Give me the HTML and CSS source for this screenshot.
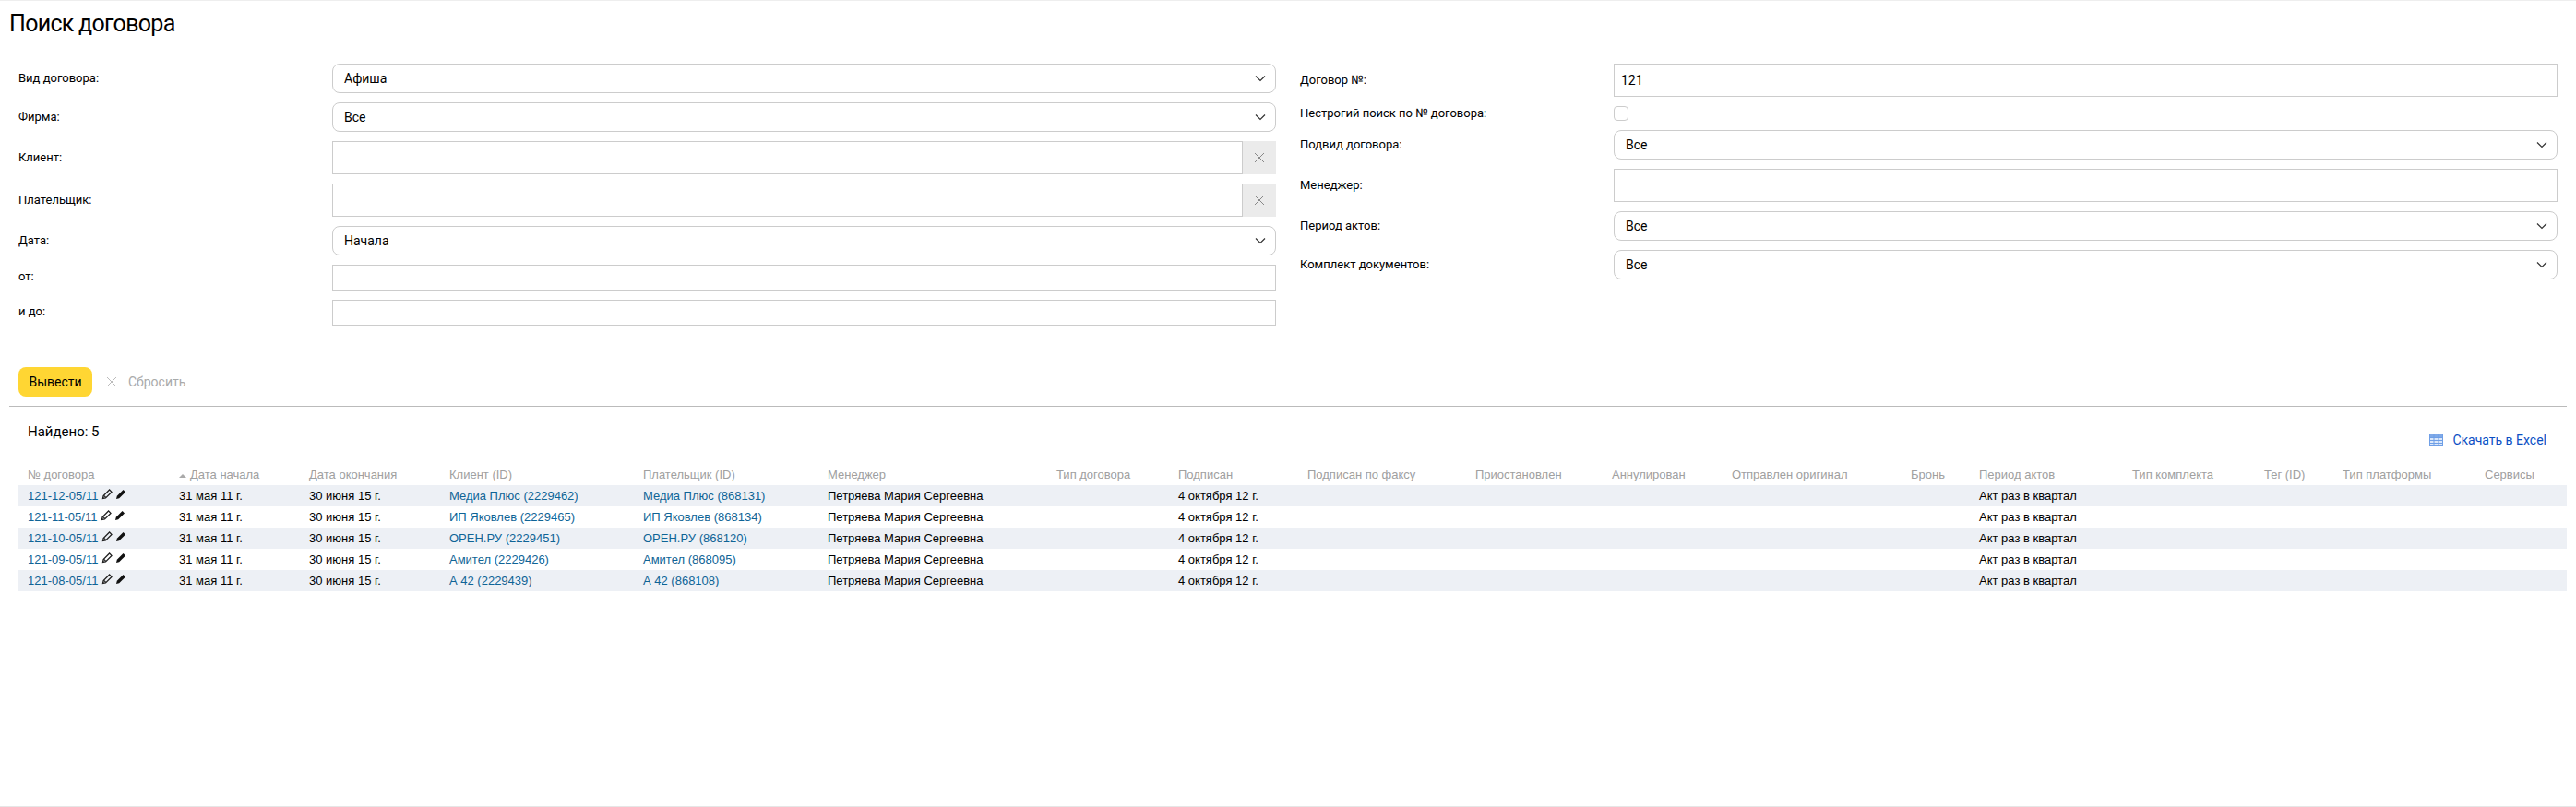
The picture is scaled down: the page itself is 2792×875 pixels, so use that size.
FILE: index.html
```html
<!DOCTYPE html>
<html lang="ru">
<head>
    <meta charset="UTF-8">
    <title>Поиск договора</title>
    <link rel="stylesheet" href="styles.css">
</head>
<body>
    <div class="page">
        <h1 class="title">Поиск договора</h1>
        <form class="filters">
            <div class="filters_col">
                <div class="row"><label>Вид договора:</label><div class="sel">Афиша<svg class="chev" viewBox="0 0 12 8"><path d="M1 1.5l5 5 5-5"/></svg></div></div>
                <div class="row"><label>Фирма:</label><div class="sel">Все<svg class="chev" viewBox="0 0 12 8"><path d="M1 1.5l5 5 5-5"/></svg></div></div>
                <div class="row"><label>Клиент:</label><div class="combo"><div class="inp"></div><div class="clear"><svg class="cross" viewBox="0 0 12 12"><path d="M1 1l10 10M11 1L1 11"/></svg></div></div></div>
                <div class="row"><label>Плательщик:</label><div class="combo"><div class="inp"></div><div class="clear"><svg class="cross" viewBox="0 0 12 12"><path d="M1 1l10 10M11 1L1 11"/></svg></div></div></div>
                <div class="row"><label>Дата:</label><div class="sel">Начала<svg class="chev" viewBox="0 0 12 8"><path d="M1 1.5l5 5 5-5"/></svg></div></div>
                <div class="row row_small"><label>от:</label><div class="inp small"></div></div>
                <div class="row row_small"><label>и до:</label><div class="inp small"></div></div>
            </div>
            <div class="filters_col">
                <div class="row"><label>Договор №:</label><div class="inp">121</div></div>
                <div class="row"><label>Нестрогий поиск по № договора:</label><div class="check"></div></div>
                <div class="row"><label>Подвид договора:</label><div class="sel">Все<svg class="chev" viewBox="0 0 12 8"><path d="M1 1.5l5 5 5-5"/></svg></div></div>
                <div class="row"><label>Менеджер:</label><div class="inp"></div></div>
                <div class="row"><label>Период актов:</label><div class="sel">Все<svg class="chev" viewBox="0 0 12 8"><path d="M1 1.5l5 5 5-5"/></svg></div></div>
                <div class="row"><label>Комплект документов:</label><div class="sel">Все<svg class="chev" viewBox="0 0 12 8"><path d="M1 1.5l5 5 5-5"/></svg></div></div>
            </div>
        </form>
        <div class="actions">
            <button class="btn_submit" type="button">Вывести</button>
            <span class="reset"><svg class="cross" viewBox="0 0 12 12"><path d="M1 1l10 10M11 1L1 11"/></svg>Сбросить</span>
        </div>
        <div class="results">
            <div class="results_top">
                <div class="found">Найдено: 5</div>
                <a class="excel"><svg class="excel_icon" viewBox="0 0 15 13"><path d="M0 0h15v13H0z" fill="#dce8fa"/><path d="M0 0h15v3H0z" fill="#7fa9e8"/><path d="M0 3.5h15M0 6.5h15M0 9.5h15M0 12.5h15M.5 0v13M5 0v13M10 0v13M14.5 0v13" stroke="#6f9fe6" fill="none"/></svg>Скачать в Excel</a>
            </div>
            <table class="grid">
                <colgroup><col><col><col><col><col><col><col><col><col><col><col><col><col><col><col><col><col><col></colgroup>
                <thead>
                    <tr><th>№ договора</th><th><i class="sort"></i>Дата начала</th><th>Дата окончания</th><th>Клиент (ID)</th><th>Плательщик (ID)</th><th>Менеджер</th><th>Тип договора</th><th>Подписан</th><th>Подписан по факсу</th><th>Приостановлен</th><th>Аннулирован</th><th>Отправлен оригинал</th><th>Бронь</th><th>Период актов</th><th>Тип комплекта</th><th>Тег (ID)</th><th>Тип платформы</th><th>Сервисы</th></tr>
                </thead>
                <tbody>
                    <tr><td><a>121-12-05/11</a> <svg class="pen" viewBox="0 0 12 12"><path d="M1.5 10.5l.6-3L8.6 1l2.4 2.4-6.5 6.5z M3 7.6l1.4 1.4" fill="none" stroke="#222" stroke-width="1.3"/></svg> <svg class="pen pen_solid" viewBox="0 0 12 12"><path d="M1 11l.8-3.2L8.6 1l2.4 2.4-6.8 6.8z" fill="#111"/></svg></td><td>31 мая 11 г.</td><td>30 июня 15 г.</td><td><a>Медиа Плюс (2229462)</a></td><td><a>Медиа Плюс (868131)</a></td><td>Петряева Мария Сергеевна</td><td></td><td>4 октября 12 г.</td><td></td><td></td><td></td><td></td><td></td><td>Акт раз в квартал</td><td></td><td></td><td></td><td></td></tr>
                    <tr><td><a>121-11-05/11</a> <svg class="pen" viewBox="0 0 12 12"><path d="M1.5 10.5l.6-3L8.6 1l2.4 2.4-6.5 6.5z M3 7.6l1.4 1.4" fill="none" stroke="#222" stroke-width="1.3"/></svg> <svg class="pen pen_solid" viewBox="0 0 12 12"><path d="M1 11l.8-3.2L8.6 1l2.4 2.4-6.8 6.8z" fill="#111"/></svg></td><td>31 мая 11 г.</td><td>30 июня 15 г.</td><td><a>ИП Яковлев (2229465)</a></td><td><a>ИП Яковлев (868134)</a></td><td>Петряева Мария Сергеевна</td><td></td><td>4 октября 12 г.</td><td></td><td></td><td></td><td></td><td></td><td>Акт раз в квартал</td><td></td><td></td><td></td><td></td></tr>
                    <tr><td><a>121-10-05/11</a> <svg class="pen" viewBox="0 0 12 12"><path d="M1.5 10.5l.6-3L8.6 1l2.4 2.4-6.5 6.5z M3 7.6l1.4 1.4" fill="none" stroke="#222" stroke-width="1.3"/></svg> <svg class="pen pen_solid" viewBox="0 0 12 12"><path d="M1 11l.8-3.2L8.6 1l2.4 2.4-6.8 6.8z" fill="#111"/></svg></td><td>31 мая 11 г.</td><td>30 июня 15 г.</td><td><a>ОРЕН.РУ (2229451)</a></td><td><a>ОРЕН.РУ (868120)</a></td><td>Петряева Мария Сергеевна</td><td></td><td>4 октября 12 г.</td><td></td><td></td><td></td><td></td><td></td><td>Акт раз в квартал</td><td></td><td></td><td></td><td></td></tr>
                    <tr><td><a>121-09-05/11</a> <svg class="pen" viewBox="0 0 12 12"><path d="M1.5 10.5l.6-3L8.6 1l2.4 2.4-6.5 6.5z M3 7.6l1.4 1.4" fill="none" stroke="#222" stroke-width="1.3"/></svg> <svg class="pen pen_solid" viewBox="0 0 12 12"><path d="M1 11l.8-3.2L8.6 1l2.4 2.4-6.8 6.8z" fill="#111"/></svg></td><td>31 мая 11 г.</td><td>30 июня 15 г.</td><td><a>Амител (2229426)</a></td><td><a>Амител (868095)</a></td><td>Петряева Мария Сергеевна</td><td></td><td>4 октября 12 г.</td><td></td><td></td><td></td><td></td><td></td><td>Акт раз в квартал</td><td></td><td></td><td></td><td></td></tr>
                    <tr><td><a>121-08-05/11</a> <svg class="pen" viewBox="0 0 12 12"><path d="M1.5 10.5l.6-3L8.6 1l2.4 2.4-6.5 6.5z M3 7.6l1.4 1.4" fill="none" stroke="#222" stroke-width="1.3"/></svg> <svg class="pen pen_solid" viewBox="0 0 12 12"><path d="M1 11l.8-3.2L8.6 1l2.4 2.4-6.8 6.8z" fill="#111"/></svg></td><td>31 мая 11 г.</td><td>30 июня 15 г.</td><td><a>А 42 (2229439)</a></td><td><a>А 42 (868108)</a></td><td>Петряева Мария Сергеевна</td><td></td><td>4 октября 12 г.</td><td></td><td></td><td></td><td></td><td></td><td>Акт раз в квартал</td><td></td><td></td><td></td><td></td></tr>
                </tbody>
            </table>
        </div>
    </div>
</body>
</html>
```
FILE: styles.css
```css
*{
    box-sizing: border-box;
}
html,body{
    margin: 0;
    height: 100%;
}
body{
    font-family: "Roboto", "Liberation Sans", sans-serif;
    font-size: 13px;
    color: #000;
    background: #fff;
}
.page{
    height: 875px;
    border-top: 1px solid #eee;
    border-bottom: 1px solid #e6e6e6;
    overflow: hidden;
}
.title{
    margin: 0;
    padding: 9px 0 0 10px;
    height: 68px;
    font-size: 25px;
    font-weight: 400;
    line-height: 32px;
    letter-spacing: -0.7px;
}
.filters{
    display: flex;
    gap: 26px;
    padding: 0 20px;
    height: 329px;
}
.filters_col{
    flex: 1;
    display: flex;
    flex-direction: column;
    gap: 10px;
}
.row{
    display: flex;
    align-items: center;
}
.row label{
    flex: 0 0 340px;
    line-height: 16px;
}
.row_small label{
    margin-bottom: 2px;
}
.sel,.inp{
    flex: 1;
    position: relative;
    border: 1px solid #ccc;
    font-size: 14px;
}
.sel{
    height: 32px;
    line-height: 30px;
    padding-left: 12px;
    border-radius: 8px;
}
.inp{
    height: 36px;
    line-height: 34px;
    padding-left: 7px;
}
.inp.small{
    height: 28px;
}
.chev{
    position: absolute;
    right: 10px;
    top: 11px;
    width: 12px;
    height: 8px;
    fill: none;
    stroke: #333;
    stroke-width: 1.2;
}
.combo{
    flex: 1;
    display: flex;
}
.clear{
    width: 36px;
    background: #ebebeb;
    display: flex;
    align-items: center;
    justify-content: center;
}
.cross{
    width: 12px;
    height: 12px;
    fill: none;
    stroke: #888;
    stroke-width: 1;
}
.check{
    width: 16px;
    height: 16px;
    border: 1px solid #ccc;
    border-radius: 4px;
}
.actions{
    display: flex;
    align-items: center;
    height: 43px;
    border-bottom: 1px solid #bbb;
    margin: 0 10px;
    padding: 0 0 10px 10px;
}
.btn_submit{
    width: 80px;
    height: 32px;
    border: none;
    border-radius: 8px;
    background: #ffd633;
    font-family: inherit;
    font-size: 14px;
    color: #000;
    padding: 0;
}
.reset{
    display: flex;
    align-items: center;
    gap: 12px;
    margin-left: 15px;
    font-size: 14px;
    color: #aaa;
}
.reset .cross{
    stroke: #bbb;
}
.results{
    margin: 0 10px;
    padding-left: 10px;
}
.results_top{
    display: flex;
    justify-content: space-between;
    height: 62px;
    padding: 17px 22px 0 10px;
}
.found{
    font-size: 15px;
    line-height: 20px;
}
.excel{
    display: flex;
    align-items: center;
    gap: 10px;
    height: 20px;
    margin-top: 9px;
    font-size: 14px;
    color: #0b4fc4;
}
.excel_icon{
    width: 15px;
    height: 13px;
}
.grid{
    width: 100%;
    table-layout: fixed;
    border-collapse: collapse;
    font-family: "Liberation Sans", Arial, sans-serif;
    font-size: 13px;
}
.grid col:nth-child(1){width:164px}
.grid col:nth-child(2){width:141px}
.grid col:nth-child(3){width:152px}
.grid col:nth-child(4){width:210px}
.grid col:nth-child(5){width:200px}
.grid col:nth-child(6){width:248px}
.grid col:nth-child(7){width:132px}
.grid col:nth-child(8){width:140px}
.grid col:nth-child(9){width:182px}
.grid col:nth-child(10){width:148px}
.grid col:nth-child(11){width:130px}
.grid col:nth-child(12){width:194px}
.grid col:nth-child(13){width:74px}
.grid col:nth-child(14){width:166px}
.grid col:nth-child(15){width:143px}
.grid col:nth-child(16){width:85px}
.grid col:nth-child(17){width:154px}
.grid th{
    height: 23px;
    padding: 0 0 0 10px;
    font-weight: 400;
    text-align: left;
    color: #a0a0a0;
    white-space: nowrap;
}
.grid td{
    height: 23px;
    padding: 0 0 0 10px;
    white-space: nowrap;
}
.grid tbody tr:nth-child(odd){
    background: #edf0f5;
}
.grid a{
    color: #0f6496;
}
.sort{
    display: inline-block;
    border-left: 4px solid transparent;
    border-right: 4px solid transparent;
    border-bottom: 4px solid #aaa;
    margin-right: 4px;
    vertical-align: 1px;
}
.pen{
    width: 12px;
    height: 12px;
    vertical-align: 0;
}
.pen_solid{
    margin-left: -1px;
}
```
